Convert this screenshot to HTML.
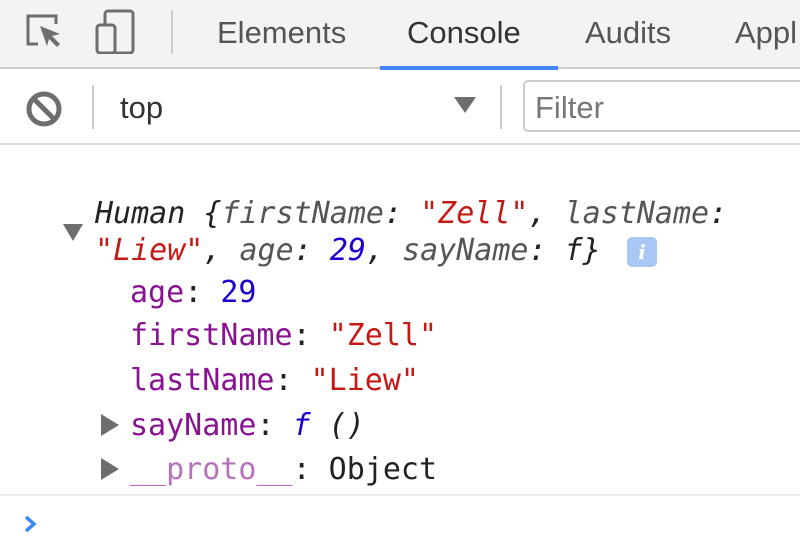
<!DOCTYPE html>
<html><head><meta charset="utf-8"><style>
*{margin:0;padding:0;box-sizing:border-box}
html,body{width:800px;height:559px;overflow:hidden}
body{background:#fff;position:relative;font-family:"Liberation Sans",sans-serif}
.a{position:absolute;white-space:pre}
.m{font-family:"DejaVu Sans Mono","Liberation Mono",monospace;font-size:30px;line-height:36px}
.tab{font-size:31px;color:#555;top:15px;line-height:36px}
.k{color:#881391}.s{color:#c41a16}.n{color:#1c00cf}.g{color:#555}.d{color:#222}
</style></head><body>
<div class="a" style="left:0;top:0;width:800px;height:69px;background:#f3f3f3;border-bottom:2px solid #ccc"></div>
<div class="a" style="left:380px;top:66px;width:178px;height:4px;background:#3f85f4"></div>
<svg class="a" style="left:24px;top:12px" width="42" height="42" viewBox="0 0 42 42"><path d="M14 4H4v28h10M14 4h18v8" fill="none" stroke="#6e6e6e" stroke-width="3"/><path d="M16 14l20 8-8 2 8 8-3 3-8-8-2 7z" fill="#6e6e6e"/></svg>
<svg class="a" style="left:94px;top:8px" width="46" height="46" viewBox="0 0 46 46"><rect x="11" y="3" width="28" height="42" rx="3" fill="none" stroke="#6e6e6e" stroke-width="3"/><rect x="3" y="17" width="18" height="28" rx="3" fill="#f3f3f3" stroke="#6e6e6e" stroke-width="3"/></svg>
<div class="a" style="left:171px;top:10px;width:2px;height:44px;background:#ccc"></div>
<div class="a tab" style="left:217px">Elements</div>
<div class="a tab" style="left:407px;color:#333">Console</div>
<div class="a tab" style="left:585px">Audits</div>
<div class="a tab" style="left:735px;width:65px;overflow:hidden">Appl</div>
<div class="a" style="left:0;top:143px;width:800px;height:2px;background:#ddd"></div>
<svg class="a" style="left:25px;top:90px" width="38" height="38" viewBox="0 0 38 38"><circle cx="19" cy="19" r="15" fill="none" stroke="#6e6e6e" stroke-width="5"/><path d="M9 9l20 20" stroke="#6e6e6e" stroke-width="5"/></svg>
<div class="a" style="left:92px;top:85px;width:2px;height:44px;background:#ccc"></div>
<div class="a" style="left:120px;top:90px;font-size:31px;line-height:36px;color:#333">top</div>
<svg class="a" style="left:454px;top:97px" width="22" height="16"><path d="M0 0h22L11 16z" fill="#6e6e6e"/></svg>
<div class="a" style="left:500px;top:85px;width:2px;height:44px;background:#ccc"></div>
<div class="a" style="left:523px;top:80px;width:290px;height:52px;border:2px solid #ccc;border-radius:5px"></div>
<div class="a" style="left:535px;top:90px;font-size:31px;line-height:36px;color:#777">Filter</div>

<svg class="a" style="left:63px;top:224px" width="20" height="18"><path d="M0 0h20L10 17z" fill="#6e6e6e"/></svg>
<div class="a m" style="left:95px;top:196px;font-style:italic"><span class="d">Human {</span><span class="g">firstName</span><span class="d">: </span><span class="s">"Zell"</span><span class="d">, </span><span class="g">lastName</span><span class="d">:</span></div>
<div class="a m" style="left:95px;top:233px;font-style:italic"><span class="s">"Liew"</span><span class="d">, </span><span class="g">age</span><span class="d">: </span><span class="n">29</span><span class="d">, </span><span class="g">sayName</span><span class="d">: f}</span></div>
<div class="a" style="left:627px;top:237px;width:30px;height:30px;border-radius:5px;background:#a9c7f5;color:#fff;font:italic bold 20px 'DejaVu Serif',serif;text-align:center;line-height:30px">i</div>
<div class="a m" style="left:130px;top:275px"><span class="k">age</span><span class="d">: </span><span class="n">29</span></div>
<div class="a m" style="left:130px;top:318px"><span class="k">firstName</span><span class="d">: </span><span class="s">"Zell"</span></div>
<div class="a m" style="left:130px;top:363px"><span class="k">lastName</span><span class="d">: </span><span class="s">"Liew"</span></div>
<svg class="a" style="left:101px;top:414px" width="18" height="22"><path d="M0 0v22L18 11z" fill="#6e6e6e"/></svg>
<div class="a m" style="left:130px;top:408px"><span class="k">sayName</span><span class="d">: </span><span class="n" style="font-style:italic">f</span><span class="d" style="font-style:italic"> ()</span></div>
<svg class="a" style="left:101px;top:458px" width="18" height="22"><path d="M0 0v22L18 11z" fill="#6e6e6e"/></svg>
<div class="a m" style="left:130px;top:452px"><span class="k" style="opacity:.6">__proto__</span><span class="d">: Object</span></div>
<div class="a" style="left:0;top:494px;width:800px;height:2px;background:#eee"></div>
<svg class="a" style="left:22px;top:514px" width="16" height="20"><path d="M4 3l8 7-8 7" fill="none" stroke="#3f85f4" stroke-width="3.5"/></svg>
</body></html>
